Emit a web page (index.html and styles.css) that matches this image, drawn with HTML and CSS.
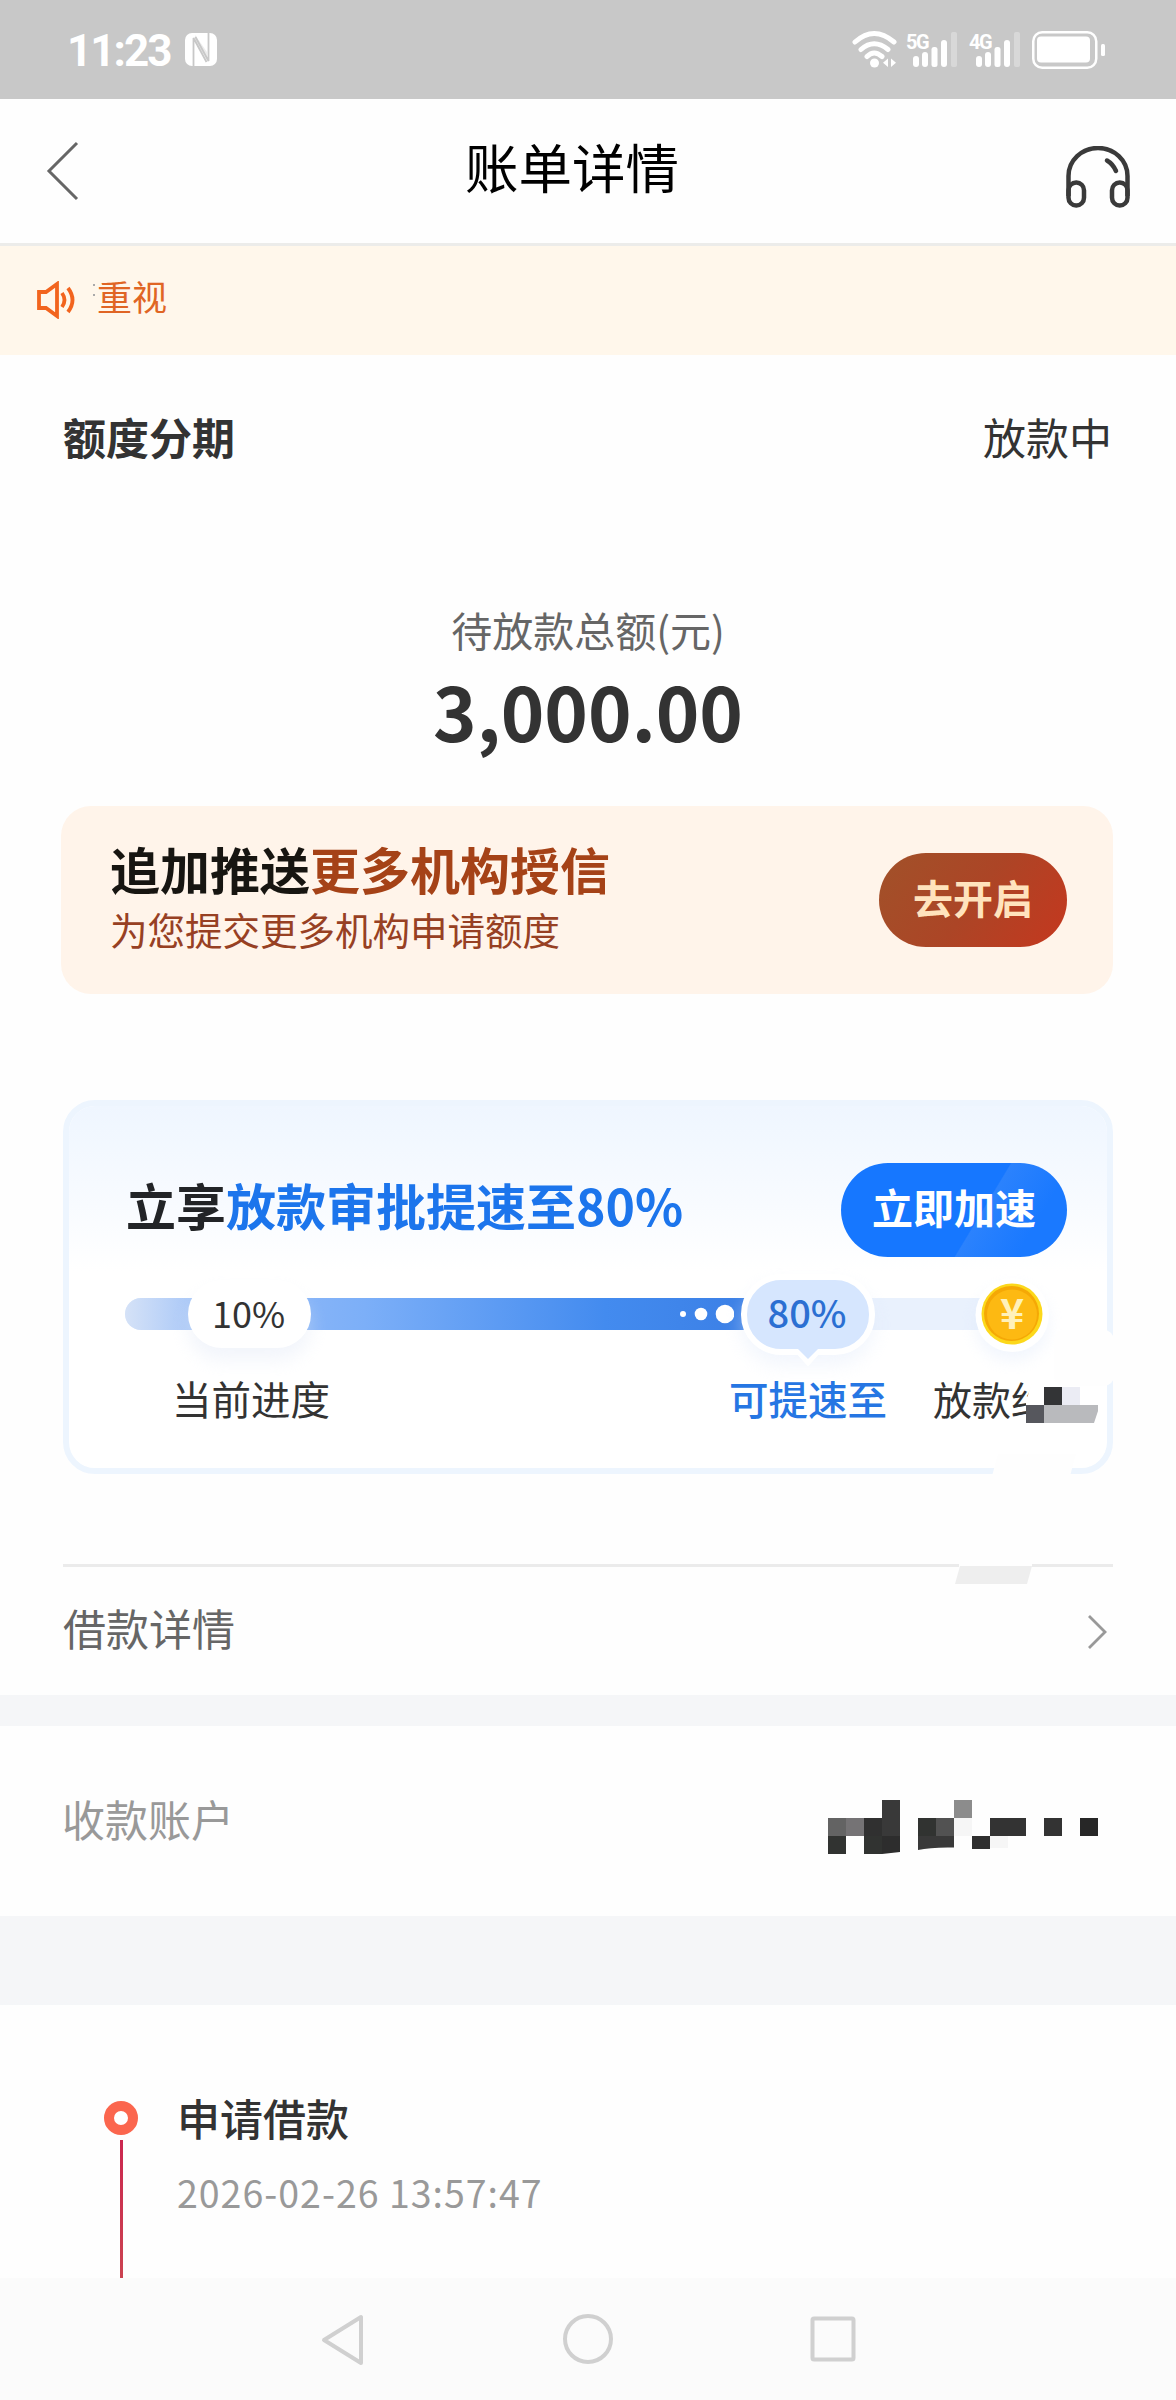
FILE: index.html
```html
<!DOCTYPE html>
<html lang="zh-CN">
<head>
<meta charset="utf-8">
<title>账单详情</title>
<link rel="stylesheet" href="styles.css">
</head>
<body>
<div class="status-bar">
  <span class="clock">11:23</span>
  <svg class="nfc" width="32" height="33" viewBox="0 0 32 33"><rect width="32" height="33" rx="7" fill="#fff"/><path d="M8.500 33V5L21.500 29M23.500 0V28L10.500 4" fill="none" stroke="#c8c8c8" stroke-width="1.800"/><path d="M10 2L22 19V26L10 9Z" fill="#c8c8c8" opacity=".35"/></svg>
  <div class="status-icons">
    <svg class="wifi" width="46" height="38" viewBox="0 0 46 38" fill="none" stroke="#fff" stroke-width="5" stroke-linecap="round"><path d="M3 12Q22-5 42 12M9 19.500Q22 8 36 19.500M15 26.500Q22 19.500 30 26.500"/><circle cx="22.500" cy="33" r="4.500" fill="#fff" stroke="none"/><path d="M36 28.500V37L31 32.700ZM39 28.500V37L44 32.700Z" fill="#fff" stroke="none"/></svg>
    <div class="signal"><span>5G</span><svg width="52" height="38" viewBox="0 0 52 38" fill="#fff"><rect x="7" y="27" width="6" height="11" rx="3"/><rect x="16" y="23" width="6" height="15" rx="3"/><rect x="25.500" y="18" width="6" height="20" rx="2.500"/><rect x="35" y="11" width="6" height="27" rx="3"/><rect x="45" y="3" width="6" height="35" rx="2" opacity=".3"/></svg></div>
    <div class="signal"><span>4G</span><svg width="52" height="38" viewBox="0 0 52 38" fill="#fff"><rect x="7" y="27" width="6" height="11" rx="3"/><rect x="16" y="23" width="6" height="15" rx="3"/><rect x="25.500" y="18" width="6" height="20" rx="2.500"/><rect x="35" y="11" width="6" height="27" rx="3"/><rect x="45" y="3" width="6" height="35" rx="2" opacity=".3"/></svg></div>
    <svg class="battery" width="74" height="42" viewBox="0 0 74 42"><rect x="1.250" y="1.250" width="63" height="35.500" rx="9" fill="none" stroke="#fff" stroke-width="2.500"/><rect x="5" y="5.500" width="53" height="26" rx="4" fill="#fff"/><rect x="69" y="13" width="4" height="12" rx="1.500" fill="#fff"/></svg>
  </div>
</div>

<header class="title-bar">
  <svg class="back" width="34" height="60" viewBox="0 0 34 60"><path d="M31 2L3 30L31 58" fill="none" stroke="#666" stroke-width="3"/></svg>
  <h1>账单详情</h1>
  <svg class="headset" width="64" height="62" viewBox="0 0 64 62" fill="none" stroke="#3a3a3a" stroke-width="4.500"><path d="M2.500 50V30A29.500 28 0 0 1 61.500 30V50"/><rect x="2.500" y="36.500" width="15.500" height="23" rx="7.700"/><rect x="46" y="36.500" width="15.500" height="23" rx="7.700"/><path d="M41 14.500Q47 18 50 25" stroke-linecap="round"/></svg>
</header>

<div class="notice">
  <svg width="40" height="38" viewBox="0 0 40 38" fill="none" stroke="#f2641e" stroke-width="3.800"><path d="M2 11V27H9L20 35V3L9 11Z"/><path d="M25 12Q30 19 25 26M31 7Q40 19 31 31"/></svg>
  <i class="tick"></i>
  <span>重视</span>
</div>

<main>
  <div class="plan-row"><strong>额度分期</strong><span>放款中</span></div>
  <div class="amount-label">待放款总额(元)</div>
  <div class="amount">3,000.00</div>

  <section class="promo">
    <div>
      <h2>追加推送<em>更多机构授信</em></h2>
      <p>为您提交更多机构申请额度</p>
    </div>
    <button class="open-btn">去开启</button>
  </section>

  <section class="speed">
    <div class="speed-head">
      <h2>立享<em>放款审批提速至80%</em></h2>
      <button class="speed-btn">立即加速</button>
    </div>
    <div class="track">
      <div class="fill"></div>
      <svg class="dots" width="60" height="24" viewBox="0 0 60 24" fill="#fff"><circle cx="9" cy="12" r="3"/><circle cx="27" cy="12" r="6.300"/><circle cx="51" cy="12" r="9.300"/></svg>
      <span class="pill current">10%</span>
      <span class="pill target">80%</span>
      <svg class="tail" width="28" height="20" viewBox="0 0 28 20"><path d="M0 5H5L14 15L23 5H28" fill="none" stroke="#fff" stroke-width="6"/><path d="M4 0H24V2L14 12L4 2Z" fill="#d6e6fe"/></svg>
      <svg class="coin" width="74" height="74" viewBox="0 0 74 74"><circle cx="37" cy="37" r="36.500" fill="#fff"/><circle cx="37" cy="36" r="30.500" fill="#fcd81b"/><circle cx="36.500" cy="35.500" r="27.500" fill="#f5a806"/><circle cx="37" cy="36.500" r="25" fill="#fdb912"/><text x="37" y="51" text-anchor="middle" class="yen">¥</text></svg>
    </div>
    <div class="labels"><span>当前进度</span><span class="blue">可提速至</span><span class="term">放款约</span></div>
    <svg class="mosaic-small" width="74" height="50" viewBox="0 0 74 50"><path d="M8 0H40V50H-2V32L2 20Z" fill="#fff"/><path d="M18 12H36V30H18Z" fill="#333436"/><path d="M36 12H54V30H36Z" fill="#ebecf4"/><path d="M0 30H18V48H0Z" fill="#56575d"/><path d="M18 30H72V36L68 48H18Z" fill="#b9babd"/></svg>
    <i class="gap-right"></i><i class="gap-bottom"></i>
  </section>

  <div class="detail-row">
    <span>借款详情</span>
    <svg width="24" height="38" viewBox="0 0 24 38"><path d="M3 3L19 19L3 35" fill="none" stroke="#999" stroke-width="2.800"/></svg>
    <svg class="sliver" width="78" height="21" viewBox="0 0 78 21"><path d="M4 0H77V3H4Z" fill="#fefefe"/><path d="M5 2H77L72 20H0Z" fill="#eee"/></svg>
  </div>
</main>

<div class="account-row">
  <span>收款账户</span>
  <svg width="270" height="54" viewBox="0 0 270 54">
    <path d="M54 0H72V36H54Z" fill="#393939"/><path d="M126 0H144V18H126Z" fill="#8c8c8c"/>
    <path d="M0 18H18V36H0Z" fill="#636363"/><path d="M18 18H36V36H18Z" fill="#757375"/><path d="M36 18H54V36H36Z" fill="#303030"/>
    <path d="M0 36H18V54H0Z" fill="#313331"/><path d="M36 36H54V54H36Z" fill="#313331"/><path d="M54 36H72V52L54 54Z" fill="#2d2d2d"/>
    <path d="M90 18H108V36H90Z" fill="#313331"/><path d="M108 18H126V36H108Z" fill="#525252"/><path d="M90 36H126V47.500Q103 47 90 50Z" fill="#393939"/>
    <path d="M126 18H144V36H126ZM162 36H180V48H162Z" fill="#f6f6f6"/><path d="M144 36H162V49H144Z" fill="#2f2f2f"/>
    <path d="M162 18H198V36H162ZM216 18H234V36H216Z" fill="#333"/><path d="M252 18H270V36H252Z" fill="#272727"/>
  </svg>
</div>

<section class="timeline">
  <div class="rail"><i class="node"></i><i class="line"></i></div>
  <div class="event"><h3>申请借款</h3><time>2026-02-26 13:57:47</time></div>
</section>

<nav>
  <svg width="46" height="54" viewBox="0 0 46 54" class="n-back"><path d="M41 4V50L4 27Z"/></svg>
  <svg width="52" height="52" viewBox="0 0 52 52" class="n-home"><circle cx="26" cy="26" r="23"/></svg>
  <svg width="46" height="46" viewBox="0 0 46 46" class="n-recent"><rect x="2.500" y="2.500" width="41" height="41" rx="1.500"/></svg>
</nav>
</body>
</html>
```
FILE: styles.css
```css
* { box-sizing: border-box; margin: 0; padding: 0; }
body {
  width: 1176px; height: 2400px; overflow: hidden;
  background: #fefefe; color: #333;
  font-family: "Noto Sans CJK SC", sans-serif;
  display: flex; flex-direction: column;
}
svg { display: block; flex: none; }
em, i { font-style: normal; }
button { border: 0; font-family: inherit; font-weight: 700; white-space: nowrap; }

.status-bar { height: 99px; flex: none; background: #c8c8c8; color: #fff; display: flex; padding: 0 70px 0 67px; }
.clock { width: 118px; font: 700 44px/98px Roboto, sans-serif; letter-spacing: -2px; margin-top: 2px; white-space: nowrap; }
.nfc { margin-top: 33px; }
.status-icons { display: flex; margin-left: auto; }
.wifi { margin-top: 30px; margin-right: 8px; }
.signal { position: relative; width: 52px; margin-top: 29px; margin-right: 11px; }
.signal span { position: absolute; left: 0; top: 3px; font: 700 20px/20px Roboto, sans-serif; letter-spacing: -1.5px; }
.battery { margin-top: 31px; }

.title-bar { height: 147px; flex: none; border-bottom: 3px solid #ececea; background: #fefefe; display: flex; justify-content: space-between; padding: 0 46px; }
.back { margin-top: 42px; }
.title-bar h1 { font-size: 53.5px; font-weight: 400; line-height: 78px; margin-top: 28px; color: #000; margin-left: -2px; }
.headset { margin-top: 47px; }

.notice { height: 109px; flex: none; background: #fff7eb; display: flex; padding-left: 37px; color: #e06524; font-size: 35px; line-height: 50px; }
.notice svg { margin-top: 35px; }
.tick { width: 2px; height: 12px; margin: 38px 2px 0 16px; border-top: 2px solid #aaa; border-bottom: 2px solid #aaa; }
.notice span { margin-top: 25px; }

main { height: 1340px; flex: none; padding: 50px 63px 0; display: flex; flex-direction: column; }
.plan-row { display: flex; justify-content: space-between; font-size: 43px; line-height: 62px; padding-right: 1px; }
.amount-label { text-align: center; font-size: 41px; line-height: 60px; margin-top: 132px; color: #666; }
.amount { text-align: center; font-size: 74px; font-weight: 700; line-height: 74px; margin-top: 14px; }

.promo { height: 188px; margin: 59px 0 0 -2px; padding: 0 46px 0 49px; border-radius: 30px; background: #fff4ea; display: flex; align-items: center; justify-content: space-between; }
.promo h2 { font-size: 50px; line-height: 68px; color: #171511; margin-top: -10px; }
.promo h2 em { color: #a54217; }
.promo p { font-size: 37.5px; line-height: 54px; color: #974023; }
.open-btn { width: 188px; height: 94px; border-radius: 47px; background: linear-gradient(125deg, #a25029 5%, #ac4526 50%, #c03a20 90%); color: #ffe3bd; font-size: 40px; line-height: 88px; padding-bottom: 6px; }

.speed { position: relative; height: 375px; margin-top: 106px; padding: 57px 40px 0 57px; border: 6px solid #edf5fe; border-radius: 32px; background: linear-gradient(#eff6ff, #f8fbff 100px, #fff 165px); background-clip: padding-box; }
.speed-head { display: flex; justify-content: space-between; height: 94px; }
.speed-head h2 { font-size: 50px; line-height: 82px; color: #222427; white-space: nowrap; }
.speed-head em { color: #1c75ec; }
.speed-btn { width: 226px; height: 94px; border-radius: 47px; background: linear-gradient(121deg, #1677ff 60%, #2b82fd 60.5%, #1a79ff 82%); color: #fff; font-size: 41px; line-height: 82px; padding-bottom: 7px; }

.track { position: relative; height: 32px; width: 900px; margin: 41px 0 0 -1px; border-radius: 16px; background: #e9f1fd; }
.fill { width: 630px; height: 32px; border-radius: 16px 0 0 16px; background: linear-gradient(90deg, #d5e2f7, #94bbf8 100px, #7caff8 240px, #438bef 480px, #3b7fe5); }
.dots { position: absolute; left: 549px; top: 4px; }
.pill { position: absolute; text-align: center; border-radius: 36px; }
.current { left: 63px; top: -18px; width: 123px; height: 68px; background: #fff; font-size: 36px; line-height: 64px; padding-right: 2px; box-shadow: 0 12px 18px #dfe5f666; }
.target { left: 616px; top: -24px; width: 134px; height: 81px; border-radius: 40px; background: #d6e6fe; border: 6px solid #fff; font-size: 38px; font-weight: 500; line-height: 64px; padding-right: 2px; color: #2b6fd2; box-shadow: 0 10px 18px #dfe9f966; }
.tail { position: absolute; left: 669px; top: 49px; }
.coin { position: absolute; left: 850px; top: -20px; border-radius: 50%; box-shadow: 0 9px 15px #dfe9f966; }
.yen { font: 700 41px "Noto Sans CJK SC", sans-serif; fill: #fff1ba; }

.labels { display: flex; margin-top: 40px; padding-left: 46px; font-size: 39.5px; line-height: 56px; }
.labels span { white-space: nowrap; }
.labels .blue { margin-left: 399px; color: #2676e3; font-weight: 500; }
.labels .term { margin-left: 46px; font-size: 39px; }
.mosaic-small { position: absolute; left: 957px; top: 269px; }
.gap-right { position: absolute; right: -7px; top: 224px; width: 60px; height: 56px; background: #fefefe; border-radius: 10px; }
.gap-bottom { position: absolute; right: 34px; bottom: -8px; width: 78px; height: 22px; background: #fefefe; transform: skewX(-15deg); }

.detail-row { position: relative; height: 131px; margin: 90px 0 0; border-top: 3px solid #ebebeb; display: flex; justify-content: space-between; color: #666; font-size: 43px; line-height: 62px; padding: 29px 3px 0 0; }
.detail-row svg { margin-top: 17px; }
.detail-row .sliver { position: absolute; margin: 0; left: 892px; top: -3px; }

.account-row { height: 221px; flex: none; border-top: 31px solid #f5f6f8; display: flex; justify-content: space-between; padding: 61px 78px 0 62px; color: #999; font-size: 43px; line-height: 62px; }
.account-row svg { margin-top: 13px; }

.timeline { height: 362px; flex: none; border-top: 89px solid #f5f6f8; display: flex; padding-left: 104px; overflow: hidden; }
.rail { width: 34px; display: flex; flex-direction: column; align-items: center; margin: 96px 39px 0 0; }
.node { width: 34px; height: 34px; border: 10px solid #fb664e; border-radius: 50%; background: #fff; flex: none; }
.line { width: 3px; flex: 1; margin-top: 5px; background: linear-gradient(#cb274f, #cb4351); }
.event { padding-top: 81px; }
.event h3 { font-size: 43px; font-weight: 500; line-height: 62px; }
.event time { display: block; font-size: 37.5px; line-height: 54px; margin-top: 17px; color: #999; letter-spacing: 1px; white-space: nowrap; }

nav { flex: 1; background: #fbfbfb; display: flex; justify-content: center; gap: 196px; padding: 35px 1px 0 0; }
nav svg { fill: none; stroke: #d0d0d0; stroke-width: 4; stroke-linejoin: round; }
.n-home { margin-top: 0; }
.n-recent { margin-top: 3px; }
```
